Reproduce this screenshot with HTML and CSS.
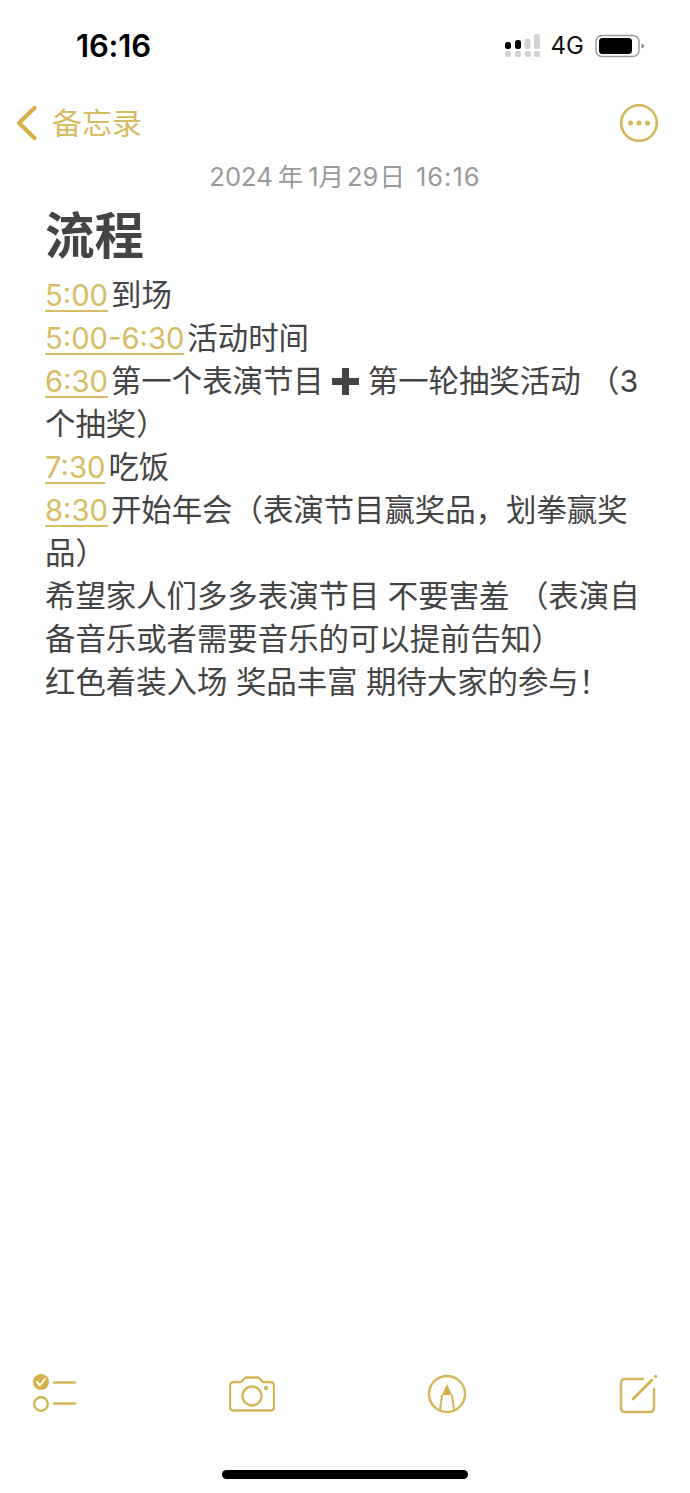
FILE: index.html
```html
<!DOCTYPE html>
<html lang="zh-CN">
<head>
<meta charset="utf-8">
<title>备忘录</title>
<link rel="stylesheet" href="styles.css">
</head>
<body>
<div class="screen">
  <header class="status">
    <span class="clock">16:16</span>
    <div class="status-right">
      <svg class="signal" width="36" height="26" viewBox="0 0 36 26">
        <g fill="#d2d2d2">
          <rect x="1" y="18" width="6" height="6" rx="2"/><rect x="11" y="18" width="6" height="6" rx="2"/><rect x="21" y="18" width="6" height="6" rx="2"/><rect x="30" y="18" width="6" height="6" rx="2"/>
          <rect x="20.500" y="6" width="6" height="10" rx="2"/><rect x="30" y="1" width="6" height="15" rx="2"/>
        </g>
        <g fill="#000">
          <rect x="1" y="9" width="6" height="7" rx="2.500"/><rect x="11" y="7" width="6" height="9" rx="2.500"/>
        </g>
      </svg>
      <span class="net">4G</span>
      <svg class="battery" width="50" height="24" viewBox="0 0 50 24">
        <rect x="1" y="1.500" width="43" height="21" rx="6" fill="none" stroke="#9a9a9a" stroke-width="1.500"/>
        <rect x="4" y="4" width="33" height="16" rx="3.500" fill="#000"/>
        <path d="M46.500 9.500 L49 11 V13 L46.500 14.500 Z" fill="#8a8a8a"/>
      </svg>
    </div>
  </header>

  <nav class="nav">
    <div class="back">
      <svg width="24" height="36" viewBox="0 0 24 36"><path d="M19.500 3 L4 18 L19.500 33" fill="none" stroke="#d4b04a" stroke-width="4.200" stroke-linecap="round" stroke-linejoin="round"/></svg>
      <span>备忘录</span>
    </div>
    <svg class="more" width="40" height="40" viewBox="0 0 40 40">
      <circle cx="20" cy="20" r="17.800" fill="none" stroke="#d4b65a" stroke-width="2.600"/>
      <g fill="#d4b65a"><circle cx="11.500" cy="20" r="2.500"/><circle cx="20" cy="20" r="2.500"/><circle cx="28.500" cy="20" r="2.500"/></g>
    </svg>
  </nav>

  <div class="date">2024<span class="date-gap">年</span>1月<span class="date-num">29</span>日<span class="date-time">16:16</span></div>

  <main class="note">
    <h1>流程</h1>
    <p><a>5:00</a>到场</p>
    <p><a>5:00-6:30</a>活动时间</p>
    <p><a>6:30</a>第一个表演节目 <svg class="plus" width="27" height="27" viewBox="0 0 27 27" role="img" aria-label="加号"><path d="M10 0 H17 V10 H27 V17 H17 V27 H10 V17 H0 V10 H10 Z" fill="#444"/></svg> 第一轮抽奖活动 （3<br>个抽奖）</p>
    <p><a>7:30</a>吃饭</p>
    <p><a>8:30</a>开始年会（表演节目赢奖品，划拳赢奖品）</p>
    <p>希望家人们多多表演节目 不要害羞 （表演自备音乐或者需要音乐的可以提前告知）</p>
    <p>红色着装入场 奖品丰富 期待大家的参与！</p>
  </main>

  <footer class="toolbar">
    <svg width="46" height="42" viewBox="0 0 46 42">
      <circle cx="9" cy="9" r="8" fill="#d4b04a"/>
      <path d="M5 9 L8 12.500 L13 6" fill="none" stroke="#fff" stroke-width="2" stroke-linecap="round" stroke-linejoin="round"/>
      <circle cx="9" cy="31" r="6.800" fill="none" stroke="#d4b04a" stroke-width="2.200"/>
      <path d="M22 9.500 H43 M22 30.500 H43" stroke="#d4b65a" stroke-width="2.400" stroke-linecap="round"/>
    </svg>
    <svg class="camera" width="46" height="36" viewBox="0 0 46 36">
      <path d="M5 6 H11 Q13 6 14 4 L15.500 2.500 Q16.500 1.500 18 1.500 H28 Q29.500 1.500 30.500 2.500 L32 4 Q33 6 35 6 H41 Q45 6 45 10 V31 Q45 34.500 41 34.500 H5 Q1 34.500 1 31 V10 Q1 6 5 6 Z" fill="none" stroke="#d4b65a" stroke-width="2.400" stroke-linejoin="round"/>
      <circle cx="23" cy="20" r="9.500" fill="none" stroke="#d4b65a" stroke-width="2.400"/>
      <circle cx="37" cy="12" r="2.200" fill="#d4b65a"/>
    </svg>
    <svg width="40" height="40" viewBox="0 0 40 40">
      <circle cx="20" cy="20" r="18" fill="none" stroke="#d4b65a" stroke-width="2.400"/>
      <path d="M20 10 L25 21 H15 Z" fill="#d4b04a"/>
      <path d="M15 21 L13 36 M25 21 L27 36" fill="none" stroke="#d4b65a" stroke-width="2"/>
    </svg>
    <svg width="40" height="40" viewBox="0 0 40 40">
      <path d="M24 5 H6 Q2 5 2 9 V34 Q2 38 6 38 H31 Q35 38 35 34 V15" fill="none" stroke="#d4b65a" stroke-width="2.400" stroke-linecap="round"/>
      <path d="M14 25 L33 6" stroke="#d4b04a" stroke-width="2.800" stroke-linecap="round"/>
      <circle cx="36.500" cy="2.500" r="1.800" fill="#d4b65a"/>
    </svg>
  </footer>
  <div class="home-wrap"><div class="home"></div></div>
</div>
</body>
</html>
```

FILE: styles.css
```css
* { box-sizing: border-box; }
html, body { margin: 0; padding: 0; background: #fff; }
body { font-family: Inter, "Noto Sans CJK SC", sans-serif; }
.screen { width: 690px; height: 1493px; display: flex; flex-direction: column; overflow: hidden; }

.status { display: flex; justify-content: space-between; align-items: center; height: 46px; margin-top: 23px; padding: 0 45px 0 76px; }
.clock { font-size: 31px; font-weight: 600; color: #000; letter-spacing: -.2px; line-height: 46px; }
.status-right { display: flex; align-items: center; }
.signal { margin-right: 11px; }
.net { font-size: 24px; color: #111; margin-right: 11px; line-height: 30px; }

.nav { display: flex; justify-content: space-between; align-items: center; height: 40px; margin-top: 34px; padding: 0 31px 0 15px; }
.back { display: flex; align-items: center; gap: 13px; color: #d6bc62; font-size: 30px; line-height: 40px; }

.date { text-align: center; color: #999; font-size: 25.500px; line-height: 34px; margin-top: 17px; }
.date-gap { margin: 0 5px; }
.date-num { margin: 0 1px 0 3px; }
.date-time { margin-left: 11px; letter-spacing: 1px; }

.note { padding: 0 44px 0 45px; color: #444; font-size: 30.400px; line-height: 43px; }
.note h1 { margin: 17px 0 13px; font-size: 49.500px; line-height: 50px; font-weight: 700; color: #444; }
.note p { margin: 0; }
.note a { color: #d6bc62; font-size: 29.200px; margin-right: 3px; text-decoration: underline; text-underline-offset: 4px; text-decoration-thickness: 2px; }
.plus { vertical-align: -3px; }

.toolbar { display: flex; justify-content: space-between; align-items: center; margin-top: auto; height: 44px; padding: 0 31px 0 32px; }
.camera { margin-left: -1px; }
.home-wrap { display: flex; justify-content: center; padding: 54px 0 14px; }
.home { width: 246px; height: 9px; background: #000; border-radius: 5px; }
```
